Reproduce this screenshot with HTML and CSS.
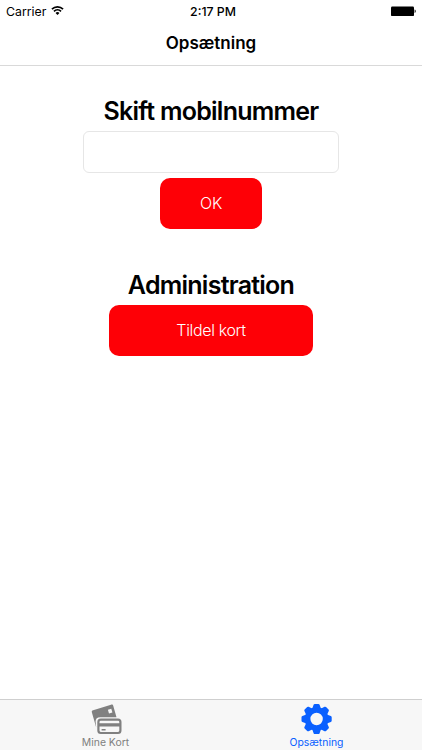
FILE: index.html
```html
<!DOCTYPE html>
<html lang="da">
<head>
    <meta charset="UTF-8">
    <meta name="viewport" content="width=device-width, initial-scale=1.0">
    <title>Opsætning</title>
    <link rel="stylesheet" href="styles.css">
</head>
<body>
    <header class="header">
        <div class="status-bar">
            <div class="carrier">
                <span>Carrier</span>
                <svg class="wifi" width="13" height="11" viewBox="0 0 14 11" fill="none" stroke="#000" stroke-width="1.8">
                    <path d="M1 4.1a8.6 8.6 0 0 1 12 0M3.2 6.4a5.4 5.4 0 0 1 7.6 0"/>
                    <path d="M7 10.4L4.9 8.2a3 3 0 0 1 4.2 0z" fill="#000" stroke="none"/>
                </svg>
            </div>
            <div class="time">2:17 PM</div>
            <svg class="battery" width="26" height="11" viewBox="0 0 26 11">
                <rect x="1" y="0.5" width="23" height="9.6" rx="1.2"/>
                <path d="M24.6 3.6c1.5.3 1.5 3.1 0 3.4z"/>
            </svg>
        </div>
        <h1 class="title">Opsætning</h1>
    </header>

    <main class="content">
        <form class="section">
            <h2 class="heading"><label for="mobile">Skift mobilnummer</label></h2>
            <input type="text" id="mobile" class="field">
            <button type="button" class="button button-small">OK</button>
        </form>
        <section class="section">
            <h2 class="heading">Administration</h2>
            <button type="button" class="button">Tildel kort</button>
        </section>
    </main>

    <nav class="tab-bar">
        <a class="tab">
            <svg class="tab-icon" width="32" height="32" viewBox="0 0 32 32">
                <path fill="#808080" d="M6.2 24.5L1.9 9.6c-.4-1.2.1-2.1 1.2-2.4L21 1.7c1.2-.4 2 .1 2.3 1.2l3.2 11.3H10.2c-3 0-4.6 1.6-4.6 4.2z"/>
                <path fill="#f7f7f7" d="M17.9 6.8l3.4-1 1.1 3.6-3.4 1z"/>
                <rect x="8.4" y="16.6" width="22" height="13.4" rx="2.4" fill="none" stroke="#808080" stroke-width="2.2"/>
                <path fill="#808080" d="M8.4 20.2h22v3.3h-22zM11.6 26.1h4v1.4h-4z"/>
            </svg>
            <span class="tab-label">Mine Kort</span>
        </a>
        <a class="tab active">
            <svg class="tab-icon" width="32" height="32" viewBox="-15.6 -16 32 32" fill="#0a60ff">
                <circle r="9" fill="none" stroke="#0a60ff" stroke-width="5.6"/>
                <g id="teeth">
                    <path id="tooth" d="M-4.4-10.2L-3-14.2Q-2.7-15.1-1.8-15.1H1.8Q2.7-15.1 3-14.2L4.4-10.2z"/>
                    <use href="#tooth" transform="rotate(45)"/>
                    <use href="#tooth" transform="rotate(90)"/>
                    <use href="#tooth" transform="rotate(135)"/>
                </g>
                <use href="#teeth" transform="rotate(180)"/>
            </svg>
            <span class="tab-label">Opsætning</span>
        </a>
    </nav>
</body>
</html>
```

FILE: styles.css
```css
* {
    box-sizing: border-box;
}

body {
    margin: 0;
    height: 100vh;
    display: flex;
    flex-direction: column;
    overflow: hidden;
    font-family: Inter, sans-serif;
    background-color: #fff;
    color: #000;
}

.header {
    height: 66px;
    border-bottom: 1px solid #d9d9d9;
}

.status-bar {
    display: grid;
    grid-template-columns: 1fr auto 1fr;
    align-items: center;
    height: 22px;
    padding: 0 6px;
    font-size: 12.3px;
}

.carrier {
    display: flex;
    align-items: center;
    gap: 5px;
}

.wifi {
    margin-bottom: 1px;
}

.time {
    font-weight: 500;
    padding-left: 4px;
}

.battery {
    justify-self: end;
}

.title {
    margin: 0;
    font-size: 17px;
    font-weight: 600;
    line-height: 43px;
    text-align: center;
}

.content {
    flex: 1;
    display: flex;
    flex-direction: column;
    gap: 39px;
    padding-top: 28px;
}

.section {
    display: flex;
    flex-direction: column;
    align-items: center;
}

.heading {
    margin: 0;
    font-size: 25px;
    font-weight: 600;
    line-height: 34px;
    letter-spacing: -0.75px;
    padding-bottom: 3px;
}

.field {
    width: 256px;
    height: 42px;
    margin-bottom: 5px;
    padding: 8px;
    border: 1px solid #e6e6e6;
    border-radius: 6px;
    font: 16px Inter, sans-serif;
}

.button {
    width: 204px;
    height: 51px;
    padding: 0 0 1px;
    border: none;
    border-radius: 10px;
    background-color: #fe0006;
    color: #fff;
    font: 300 16px Inter, sans-serif;
    letter-spacing: -0.35px;
}

.button-small {
    width: 102px;
}

.tab-bar {
    display: flex;
    height: 51px;
    border-top: 1px solid #cfcfcf;
    background-color: #f7f7f7;
}

.tab {
    flex: 1;
    display: flex;
    flex-direction: column;
    align-items: center;
    padding-top: 3px;
    color: #808080;
}

.tab-icon {
    flex-shrink: 0;
}

.tab-label {
    font-size: 10.4px;
    line-height: 15px;
}

.active {
    color: #0a60ff;
}
```
